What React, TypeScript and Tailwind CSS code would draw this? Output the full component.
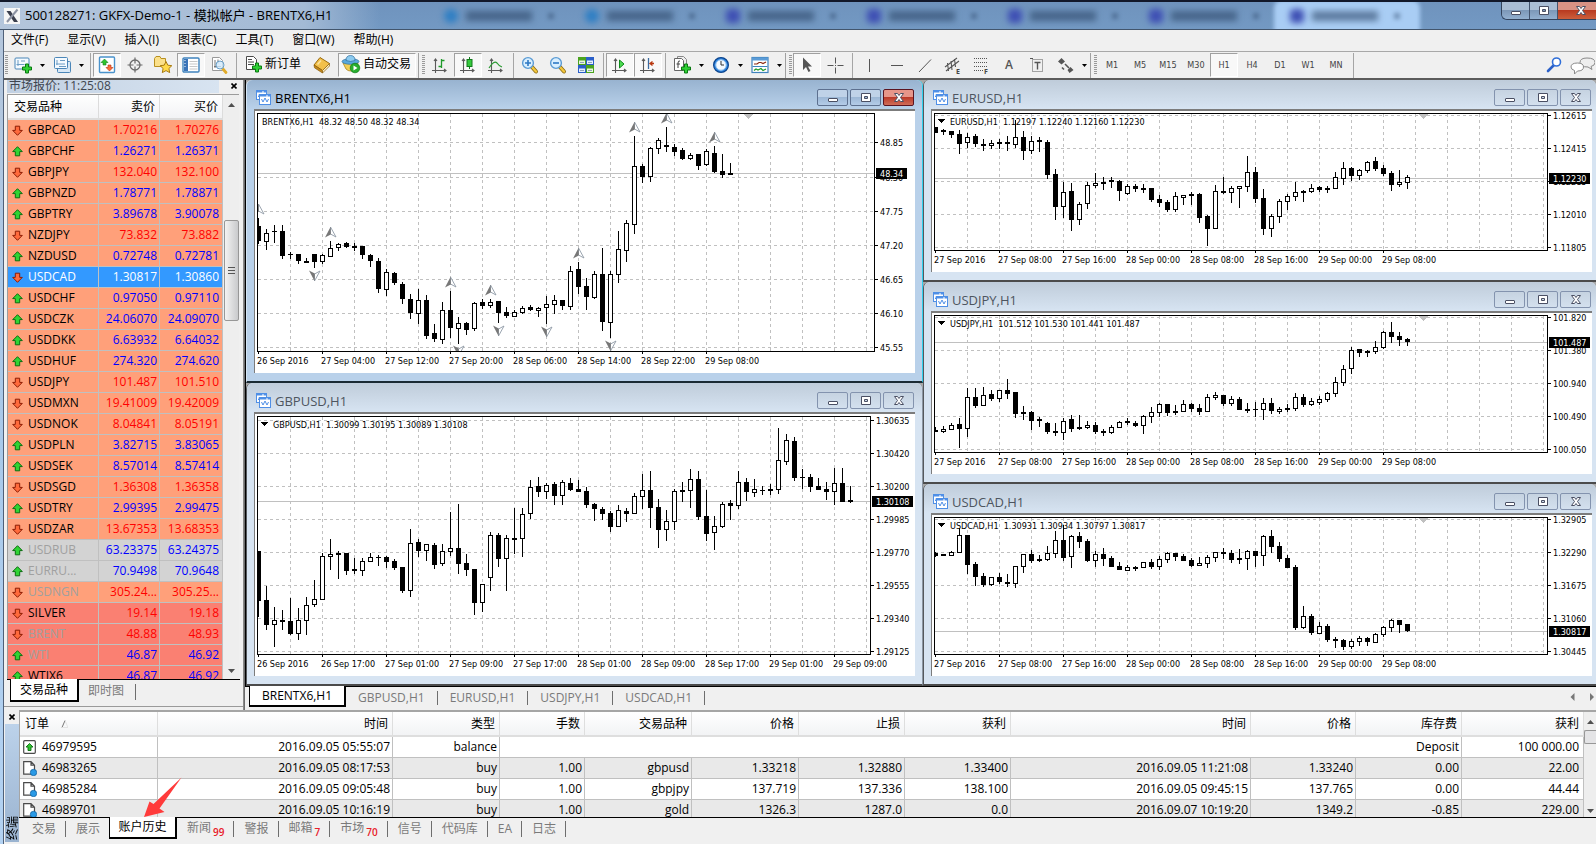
import { ReactNode } from 'react';
import { clsx } from 'clsx';

// high, body top, body bottom, low, filled. Three steps to a pixel.
type Candle = [number, number, number, number, number];

interface ChartData {
  symbol: string;
  quote: string;
  menu: boolean;
  base: number;
  height: number;
  bid: [number, string];
  levels: [number, string][];
  times: string[];
  shift?: number;
  candles: Candle[];
  fractals?: ['up' | 'down', number, number][];
}

const DAYS = ['27 Sep 2016', '27 Sep 08:00', '27 Sep 16:00', '28 Sep 00:00', '28 Sep 08:00', '28 Sep 16:00', '29 Sep 00:00', '29 Sep 08:00'];

const brent: ChartData = {
  symbol: 'BRENTX6,H1',
  quote: '48.32 48.50 48.32 48.34',
  menu: false,
  base: 115,
  height: 239,
  bid: [297, '48.34'],
  levels: [[202, '48.85'], [307, '48.30'], [409, '47.75'], [511, '47.20'], [613, '46.65'], [715, '46.10'], [817, '45.55']],
  times: ['26 Sep 2016', '27 Sep 04:00', '27 Sep 12:00', '27 Sep 20:00', '28 Sep 06:00', '28 Sep 14:00', '28 Sep 22:00', '29 Sep 08:00'],
  shift: 490,
  fractals: [
    ['up', 0, 388], ['down', 7, 590], ['up', 9, 457], ['up', 24, 607], ['down', 25, 815], ['up', 29, 632], ['down', 30, 755],
    ['down', 36, 758], ['up', 40, 521], ['down', 44, 800], ['up', 47, 142], ['up', 51, 116], ['up', 57, 172],
  ],
  candles: [
    [432, 456, 501, 510, 1], [464, 475, 503, 527, 0], [453, 471, 474, 507, 1], [453, 471, 546, 555, 1], [534, 540, 543, 555, 1],
    [540, 540, 561, 570, 1], [552, 561, 567, 567, 1], [538, 538, 564, 582, 1], [540, 543, 564, 570, 0], [501, 522, 548, 548, 0],
    [507, 510, 521, 530, 0], [502, 507, 519, 522, 1], [507, 516, 522, 530, 1], [516, 516, 543, 555, 1], [540, 543, 561, 578, 1],
    [552, 561, 645, 657, 1], [583, 594, 648, 665, 0], [594, 597, 627, 633, 1], [624, 630, 675, 690, 1], [660, 675, 717, 735, 1],
    [645, 678, 719, 750, 0], [663, 678, 786, 795, 1], [750, 777, 795, 804, 1], [684, 706, 797, 809, 0], [651, 708, 762, 792, 1],
    [729, 747, 765, 810, 0], [744, 747, 768, 783, 1], [684, 685, 765, 770, 0], [675, 684, 696, 705, 1], [675, 684, 696, 702, 0],
    [681, 681, 717, 747, 1], [699, 714, 725, 732, 1], [708, 714, 728, 728, 0], [696, 702, 716, 720, 0], [693, 699, 708, 711, 1],
    [699, 702, 711, 728, 0], [666, 690, 702, 750, 0], [663, 678, 692, 720, 0], [678, 678, 696, 708, 1], [576, 591, 698, 708, 0],
    [564, 585, 639, 660, 1], [612, 636, 669, 708, 1], [591, 600, 671, 675, 0], [522, 600, 744, 771, 1], [591, 600, 746, 792, 0],
    [471, 525, 602, 627, 0], [438, 447, 530, 564, 0], [186, 276, 452, 480, 0], [270, 276, 309, 327, 1], [219, 222, 308, 324, 0],
    [192, 198, 224, 240, 0], [159, 213, 219, 234, 1], [210, 219, 234, 246, 1], [222, 228, 255, 258, 1], [237, 243, 254, 258, 0],
    [240, 240, 276, 288, 1], [225, 231, 272, 276, 0], [216, 237, 294, 297, 1], [240, 291, 303, 312, 1], [267, 297, 302, 302, 1],
  ],
};

const gbpusd: ChartData = {
  symbol: 'GBPUSD,H1',
  quote: '1.30099 1.30195 1.30089 1.30108',
  menu: true,
  base: 109,
  height: 239,
  bid: [364, '1.30108'],
  levels: [
    [121, '1.30635'], [220, '1.30420'], [320, '1.30200'], [418, '1.29985'], [517, '1.29770'], [616, '1.29555'], [715, '1.29340'], [814, '1.29125'],
  ],
  times: [
    '26 Sep 2016', '26 Sep 17:00', '27 Sep 01:00', '27 Sep 09:00', '27 Sep 17:00',
    '28 Sep 01:00', '28 Sep 09:00', '28 Sep 17:00', '29 Sep 01:00', '29 Sep 09:00',
  ],
  candles: [
    [516, 516, 666, 714, 1], [621, 663, 738, 753, 1], [684, 723, 738, 804, 0], [693, 723, 729, 753, 1], [657, 726, 765, 768, 1],
    [687, 723, 765, 783, 0], [654, 676, 725, 768, 0], [603, 660, 678, 684, 0], [522, 531, 662, 663, 0], [480, 525, 533, 573, 0],
    [516, 521, 528, 600, 1], [522, 522, 576, 588, 1], [537, 570, 574, 585, 1], [537, 546, 576, 591, 0], [522, 534, 549, 549, 0],
    [528, 534, 537, 561, 1], [531, 534, 549, 567, 1], [540, 546, 567, 573, 1], [564, 564, 636, 642, 1], [450, 492, 635, 654, 0],
    [480, 489, 516, 534, 1], [495, 495, 516, 546, 0], [492, 498, 556, 570, 1], [495, 516, 555, 561, 0], [399, 507, 518, 530, 0],
    [375, 507, 555, 585, 1], [525, 552, 573, 591, 1], [570, 570, 672, 708, 1], [615, 615, 671, 699, 0], [459, 468, 597, 636, 0],
    [462, 468, 540, 564, 1], [468, 477, 540, 636, 0], [387, 477, 483, 525, 1], [387, 405, 480, 534, 0], [303, 324, 405, 420, 0],
    [294, 321, 339, 354, 1], [312, 318, 339, 360, 0], [309, 315, 351, 378, 1], [303, 309, 351, 378, 0], [297, 312, 333, 336, 1],
    [303, 330, 339, 339, 1], [324, 336, 378, 387, 1], [372, 375, 390, 426, 1], [384, 390, 405, 423, 1], [396, 402, 444, 459, 1],
    [378, 393, 444, 444, 0], [387, 396, 405, 429, 1], [342, 351, 405, 405, 0], [285, 333, 354, 390, 0], [276, 333, 387, 447, 1],
    [360, 384, 453, 507, 1], [393, 426, 453, 486, 0], [330, 336, 429, 453, 0], [309, 333, 339, 369, 1], [270, 300, 336, 387, 0],
    [276, 300, 414, 423, 1], [333, 411, 465, 486, 1], [411, 441, 462, 513, 0], [369, 375, 444, 447, 0], [363, 372, 381, 423, 1],
    [276, 309, 381, 390, 0], [297, 309, 339, 366, 1], [300, 330, 342, 354, 0], [321, 332, 336, 348, 1], [315, 330, 336, 348, 1],
    [147, 243, 333, 345, 0], [165, 183, 248, 258, 0], [174, 186, 297, 306, 1], [270, 294, 297, 330, 1], [285, 294, 324, 339, 1],
    [297, 321, 333, 333, 1], [309, 330, 339, 363, 1], [267, 312, 339, 378, 0], [267, 312, 369, 369, 1], [321, 363, 369, 372, 1],
  ],
};

const eurusd: ChartData = {
  symbol: 'EURUSD,H1',
  quote: '1.12197 1.12240 1.12160 1.12230',
  menu: true,
  base: 115,
  height: 138,
  bid: [310, '1.12230'],
  levels: [[121, '1.12615'], [220, '1.12415'], [319, '1.12215'], [418, '1.12010'], [517, '1.11805']],
  times: DAYS,
  shift: 488,
  candles: [
    [159, 159, 177, 177, 1], [165, 168, 174, 183, 1], [171, 171, 183, 192, 1], [168, 180, 210, 240, 1], [177, 189, 207, 222, 0],
    [180, 186, 210, 219, 1], [195, 209, 215, 231, 1], [198, 207, 215, 225, 0], [195, 204, 210, 225, 1], [186, 204, 210, 231, 1],
    [138, 189, 213, 222, 0], [171, 189, 231, 258, 1], [186, 201, 231, 240, 0], [189, 198, 204, 234, 1], [198, 204, 303, 315, 1],
    [285, 300, 399, 438, 1], [324, 354, 399, 432, 0], [327, 351, 438, 471, 1], [384, 390, 438, 453, 0], [324, 333, 389, 405, 0],
    [297, 327, 335, 342, 0], [309, 324, 330, 348, 1], [309, 318, 324, 342, 1], [318, 321, 351, 381, 1], [330, 336, 360, 363, 0],
    [330, 336, 345, 354, 1], [330, 342, 348, 357, 1], [342, 342, 378, 384, 1], [363, 375, 387, 399, 1], [378, 384, 408, 414, 1],
    [354, 366, 408, 414, 0], [363, 363, 371, 393, 0], [354, 360, 366, 393, 1], [357, 360, 432, 447, 1], [423, 426, 465, 516, 1],
    [333, 351, 465, 465, 0], [309, 350, 357, 360, 1], [336, 342, 357, 387, 0], [336, 336, 345, 402, 0], [246, 294, 339, 354, 0],
    [279, 294, 375, 387, 1], [345, 372, 465, 483, 1], [420, 426, 465, 489, 0], [375, 381, 429, 447, 0], [360, 366, 384, 408, 0],
    [324, 354, 369, 381, 0], [348, 350, 357, 384, 1], [330, 342, 354, 357, 0], [336, 339, 348, 354, 1], [336, 342, 348, 357, 1],
    [294, 309, 345, 345, 0], [264, 282, 315, 333, 0], [279, 282, 306, 321, 1], [285, 288, 306, 318, 0], [261, 264, 291, 297, 0],
    [249, 261, 285, 291, 1], [273, 282, 300, 306, 1], [291, 297, 333, 351, 1], [288, 324, 333, 339, 0], [303, 309, 327, 345, 0],
  ],
};

const usdjpy: ChartData = {
  symbol: 'USDJPY,H1',
  quote: '101.512 101.530 101.441 101.487',
  menu: true,
  base: 112,
  height: 138,
  bid: [193, '101.487'],
  levels: [[118, '101.820'], [217, '101.380'], [316, '100.940'], [415, '100.490'], [514, '100.050']],
  times: DAYS,
  shift: 488,
  candles: [
    [450, 457, 463, 465, 1], [447, 454, 463, 468, 0], [438, 444, 458, 459, 0], [423, 441, 456, 513, 1], [333, 360, 455, 480, 0],
    [333, 360, 387, 393, 1], [330, 354, 386, 387, 0], [339, 351, 366, 372, 1], [339, 339, 365, 375, 0], [306, 339, 351, 366, 1],
    [345, 345, 411, 423, 1], [387, 405, 411, 429, 1], [402, 405, 432, 459, 1], [420, 426, 432, 450, 1], [435, 438, 465, 471, 1],
    [438, 460, 467, 477, 1], [423, 430, 467, 489, 0], [414, 426, 456, 465, 1], [414, 450, 456, 459, 1], [432, 444, 453, 456, 0],
    [435, 444, 465, 471, 1], [456, 462, 468, 477, 1], [444, 450, 467, 471, 0], [432, 433, 453, 453, 0], [423, 432, 438, 444, 1],
    [432, 438, 447, 450, 1], [414, 417, 446, 471, 0], [390, 405, 420, 438, 0], [378, 381, 407, 420, 0], [381, 381, 408, 417, 1],
    [384, 402, 408, 414, 1], [369, 381, 404, 405, 0], [378, 381, 396, 405, 1], [381, 393, 405, 414, 1], [351, 360, 405, 405, 0],
    [345, 354, 362, 369, 0], [354, 354, 381, 387, 1], [357, 366, 381, 387, 0], [360, 366, 399, 399, 1], [378, 396, 400, 408, 1],
    [375, 396, 399, 420, 1], [363, 378, 398, 429, 0], [363, 378, 402, 411, 1], [390, 396, 405, 411, 0], [381, 393, 399, 405, 1],
    [348, 360, 396, 402, 0], [351, 360, 384, 390, 1], [363, 372, 383, 387, 0], [357, 366, 377, 384, 0], [345, 348, 368, 375, 0],
    [300, 315, 350, 360, 0], [264, 276, 317, 327, 0], [210, 219, 276, 291, 0], [216, 216, 228, 240, 1], [219, 222, 228, 240, 1],
    [192, 210, 225, 231, 0], [162, 165, 212, 216, 0], [135, 165, 180, 198, 1], [165, 177, 189, 207, 1], [183, 186, 195, 207, 1],
  ],
};

const usdcad: ChartData = {
  symbol: 'USDCAD,H1',
  quote: '1.30931 1.30934 1.30797 1.30817',
  menu: true,
  base: 112,
  height: 138,
  bid: [455, '1.30817'],
  levels: [[118, '1.32905'], [217, '1.32290'], [316, '1.31675'], [415, '1.31060'], [514, '1.30445']],
  times: DAYS,
  shift: 488,
  candles: [
    [219, 222, 231, 234, 1], [225, 225, 230, 231, 1], [216, 219, 231, 231, 0], [147, 168, 221, 221, 0], [168, 168, 258, 285, 1],
    [249, 255, 294, 321, 1], [282, 291, 318, 324, 1], [294, 294, 318, 321, 0], [282, 294, 309, 315, 1], [285, 309, 315, 324, 1],
    [261, 261, 315, 327, 0], [225, 225, 263, 282, 0], [213, 225, 246, 252, 1], [228, 240, 246, 249, 1], [201, 222, 242, 246, 0],
    [156, 183, 224, 237, 0], [138, 183, 237, 246, 1], [168, 171, 233, 267, 0], [159, 171, 189, 207, 1], [180, 186, 246, 249, 1],
    [216, 225, 246, 264, 0], [207, 225, 240, 261, 1], [231, 237, 264, 264, 1], [249, 261, 273, 273, 1], [258, 264, 276, 276, 0],
    [261, 264, 270, 276, 1], [249, 249, 266, 267, 0], [240, 249, 264, 270, 1], [231, 240, 264, 273, 0], [219, 222, 243, 252, 0],
    [222, 222, 234, 246, 1], [225, 231, 246, 246, 1], [237, 243, 261, 264, 1], [234, 252, 260, 261, 0], [228, 234, 254, 267, 0],
    [219, 219, 236, 249, 0], [207, 219, 225, 240, 1], [213, 222, 243, 252, 1], [210, 237, 243, 255, 1], [213, 216, 239, 273, 0],
    [216, 216, 231, 264, 1], [168, 171, 231, 261, 0], [153, 171, 204, 222, 1], [189, 201, 240, 249, 1], [228, 237, 267, 267, 1],
    [258, 264, 447, 453, 1], [381, 411, 446, 450, 0], [405, 411, 462, 468, 1], [429, 441, 464, 465, 0], [435, 441, 483, 489, 1],
    [474, 480, 486, 507, 1], [480, 483, 504, 513, 1], [480, 486, 503, 510, 0], [471, 477, 488, 501, 0], [474, 477, 489, 501, 1],
    [462, 465, 491, 492, 0], [441, 444, 467, 474, 0], [420, 423, 446, 459, 0], [423, 423, 438, 462, 1], [435, 435, 456, 459, 1],
  ],
};

type Tone = 'salmon' | 'red' | 'gray' | 'selected';

const quotes: [string, string, string, 'up' | 'down', Tone, boolean?][] = [
  ['GBPCAD', '1.70216', '1.70276', 'down', 'salmon'],
  ['GBPCHF', '1.26271', '1.26371', 'up', 'salmon'],
  ['GBPJPY', '132.040', '132.100', 'down', 'salmon'],
  ['GBPNZD', '1.78771', '1.78871', 'up', 'salmon'],
  ['GBPTRY', '3.89678', '3.90078', 'up', 'salmon'],
  ['NZDJPY', '73.832', '73.882', 'down', 'salmon'],
  ['NZDUSD', '0.72748', '0.72781', 'up', 'salmon'],
  ['USDCAD', '1.30817', '1.30860', 'down', 'selected'],
  ['USDCHF', '0.97050', '0.97110', 'up', 'salmon'],
  ['USDCZK', '24.06070', '24.09070', 'up', 'salmon'],
  ['USDDKK', '6.63932', '6.64032', 'up', 'salmon'],
  ['USDHUF', '274.320', '274.620', 'up', 'salmon'],
  ['USDJPY', '101.487', '101.510', 'down', 'salmon'],
  ['USDMXN', '19.41009', '19.42009', 'down', 'salmon'],
  ['USDNOK', '8.04841', '8.05191', 'down', 'salmon'],
  ['USDPLN', '3.82715', '3.83065', 'up', 'salmon'],
  ['USDSEK', '8.57014', '8.57414', 'up', 'salmon'],
  ['USDSGD', '1.36308', '1.36358', 'down', 'salmon'],
  ['USDTRY', '2.99395', '2.99475', 'up', 'salmon'],
  ['USDZAR', '13.67353', '13.68353', 'down', 'salmon'],
  ['USDRUB', '63.23375', '63.24375', 'up', 'gray', true],
  ['EURRU...', '70.9498', '70.9648', 'up', 'gray', true],
  ['USDNGN', '305.24...', '305.25...', 'down', 'salmon', true],
  ['SILVER', '19.14', '19.18', 'down', 'red'],
  ['BRENT', '48.88', '48.93', 'down', 'red', true],
  ['WTI', '46.87', '46.92', 'up', 'red', true],
  ['WTIX6', '46.87', '46.92', 'up', 'red'],
];

const orders = [
  ['46983265', '2016.09.05 08:17:53', 'buy', '1.00', 'gbpusd', '1.33218', '1.32880', '1.33400', '2016.09.05 11:21:08', '1.33240', '0.00', '22.00'],
  ['46985284', '2016.09.05 09:05:48', 'buy', '1.00', 'gbpjpy', '137.719', '137.336', '138.100', '2016.09.05 09:45:15', '137.765', '0.00', '44.44'],
  ['46989701', '2016.09.05 10:16:19', 'buy', '1.00', 'gold', '1326.3', '1287.0', '0.0', '2016.09.07 10:19:20', '1349.2', '-0.85', '229.00'],
];

const toneClass: Record<Tone, string> = {
  salmon: 'bg-[#ffa07a]',
  red: 'bg-[#fa8072]',
  gray: 'bg-[#d3d3d3]',
  selected: 'bg-[#3399ff] text-white',
};

function PriceArrow({ dir }: { dir: 'up' | 'down' }) {
  return (
    <svg width="11" height="11" viewBox="0 0 11 11" className={clsx('shrink-0', dir === 'down' && 'rotate-180')}>
      <path
        d="M5.5 0.7 L10.3 5.6 H7.7 V9.8 H3.3 V5.6 H0.7 Z"
        fill={dir === 'up' ? '#2fd433' : '#ff6a3c'}
        stroke={dir === 'up' ? '#0b6d10' : '#8c1c04'}
        strokeWidth="1"
        strokeLinejoin="round"
      />
    </svg>
  );
}

function Fractal({ dir, x, y }: { dir: 'up' | 'down'; x: number; y: number }) {
  const flip = dir === 'down' ? `translate(${x} ${y + 10}) scale(1 -1)` : `translate(${x} ${y})`;
  return (
    <g transform={flip}>
      <path d="M0.5 0 L6 10 L0.5 7 Z" fill="#fff" stroke="#8e9aa6" strokeWidth="0.9" />
      <path d="M0.5 0 L-5 10.5 L0.8 7.5 Z" fill="#777" />
    </g>
  );
}

function Chart({ data }: { data: ChartData }) {
  const y = (v: number) => Math.floor((v - data.base) / 3);
  const inner = data.height - 2;
  const columns = Array.from({ length: 60 }, (_, i) => 32 + i * 32);
  return (
    <div className="h-full bg-white pl-0.5 pt-0.5 font-['DejaVu_Sans_Condensed','Open_Sans',sans-serif] text-[9px]">
      <div className="flex">
        <div className="min-w-0 flex-1 border border-black">
          <svg className="block w-full" height={inner} shapeRendering="crispEdges">
            <g stroke="#c0c0c0" strokeDasharray="3 3">
              {columns.map((x) => (
                <line key={x} x1={x + 0.5} x2={x + 0.5} y1="0" y2={inner} />
              ))}
              {data.levels.map(([v]) => (
                <line key={v} x1="0" x2="100%" y1={y(v) - 0.5} y2={y(v) - 0.5} />
              ))}
            </g>
            <line x1="0" x2="100%" y1={y(data.bid[0]) - 0.5} y2={y(data.bid[0]) - 0.5} stroke="#c0c0c0" />
            {data.shift && <path d={`M${data.shift - 5} 0 h10 l-5 5 Z`} fill="#c0c0c0" />}
            {data.menu && <path d="M2 5 h8 l-4 4 Z" fill="#000" />}
            <text x={data.menu ? 15 : 4} y="11" fill="#000">
              {data.symbol + '\u00a0\u00a0' + data.quote}
            </text>
            {data.candles.map(([high, top, bottom, low, filled], i) => {
              const h = Math.max(1, y(bottom) - y(top));
              return (
                <g key={i}>
                  <rect x={i * 8} y={y(high) - 1} width="1" height={y(low) - y(high)} />
                  <rect x={i * 8 - 2} y={y(top) - 1} width="5" height={h} />
                  {!filled && h > 2 && <rect x={i * 8 - 1} y={y(top)} width="3" height={h - 2} fill="#fff" />}
                </g>
              );
            })}
            <g shapeRendering="auto">
              {data.fractals?.map(([dir, i, v]) => (
                <Fractal key={i} dir={dir} x={i * 8} y={y(v) - 1} />
              ))}
            </g>
          </svg>
        </div>
        <svg width={data.bid[1].length > 5 ? 44 : 40} height={data.height} className="block shrink-0 overflow-visible">
          {data.levels.map(([v, label]) => (
            <g key={v}>
              <rect x="0" y={y(v)} width="3" height="1" />
              <text x="5" y={y(v) + 4}>{label}</text>
            </g>
          ))}
          <rect x="1" y={y(data.bid[0]) - 5} width={data.bid[1].length > 5 ? 41 : 31} height="11" />
          <text x="5" y={y(data.bid[0]) + 4} fill="#fff">{data.bid[1]}</text>
        </svg>
      </div>
      <svg className="block w-full overflow-visible" height="16">
        {data.times.map((label, i) => (
          <g key={label}>
            <rect x={i * 64 + 1} y="0" width="1" height="2" />
            <text x={i * 64} y="12">{label}</text>
          </g>
        ))}
      </svg>
    </div>
  );
}

type Glyph = 'min' | 'max' | 'close';

function CaptionGlyph({ kind }: { kind: Glyph }) {
  return (
    <svg width="14" height="12" viewBox="0 0 14 12" fill="#fff" stroke="#4a4f63" strokeWidth="1">
      {kind === 'min' && <rect x="2.5" y="6.5" width="9" height="3" rx="0.5" />}
      {kind === 'max' && <path d="M2.5 1.5 h9 v8 h-9 Z M5.5 4.5 v2 h3 v-2 Z" fillRule="evenodd" />}
      {kind === 'close' && (
        <path d="M2.5 1.5 h3 l1.5 2 l1.5 -2 h3 l-3 4 l3 4 h-3 l-1.5 -2 l-1.5 2 h-3 l3 -4 Z" strokeLinejoin="round" />
      )}
    </svg>
  );
}

function CaptionButton({ kind, active, label }: { kind: Glyph; active: boolean; label: string }) {
  return (
    <button
      aria-label={label}
      className={clsx(
        'flex h-[17px] w-[31px] items-center justify-center rounded-xs border',
        active && kind === 'close' && 'border-[#5b1420] bg-linear-to-b from-[#e6968a] from-45% via-[#bb3a2a] via-50% to-[#cf6c58]',
        active && kind !== 'close' && 'border-[#5d708f] bg-linear-to-b from-[#bfd2e8] from-45% via-[#9db8d6] via-50% to-[#b4cce8]',
        !active && 'border-[#8393ae] bg-linear-to-b from-[#c6d3e1] to-[#d3e0ee]',
      )}
    >
      <CaptionGlyph kind={kind} />
    </button>
  );
}

function ChartIcon() {
  return (
    <svg width="15" height="15" viewBox="0 0 15 15" fill="none" stroke="#4f8fe6">
      <rect x="0.5" y="0.5" width="10" height="9" fill="#fff" />
      <path d="M0.5 1.5 h10" strokeWidth="2" strokeDasharray="6 1" />
      <path d="M2 6.5 h1 v-2 h1.5 v3" />
      <rect x="3.5" y="4.5" width="11" height="10" fill="#fff" />
      <path d="M3.5 5.5 h11" strokeWidth="2" strokeDasharray="7 1" />
      <path d="M5.5 9 l1.5 3 l2 -4 l2 4 l1.5 -3" />
    </svg>
  );
}

function ChartWindow({ data, active = false, cut = false }: { data: ChartData; active?: boolean; cut?: boolean }) {
  return (
    <section
      className={clsx(
        'flex flex-1 flex-col rounded-t-md border-b-2 border-l pb-2 pl-[7px]',
        cut ? 'pr-1' : 'border-r pr-[7px]',
        active
          ? 'border-b-[#1a2a33] border-l-[#d5e6f5] border-r-[#2fd0ee] bg-[#b9d1ea]'
          : 'border-b-[#4b4b4b] border-l-[#55585c] border-r-[#8b96a3] bg-[#d7e4f2]',
      )}
    >
      <header
        className={clsx(
          '-ml-[7px] flex h-[29px] shrink-0 items-center rounded-t-md pl-[9px] pt-1.5',
          cut ? '-mr-1 pr-[5px]' : '-mr-[7px] pr-2',
          active ? 'bg-linear-to-b from-[#98b3d0] to-[#b9d1ea]' : 'bg-linear-to-b from-[#bfccda] to-[#d7e4f2]',
        )}
      >
        <ChartIcon />
        <h2 className={clsx('ml-1 flex-1 text-[13px] leading-4', active ? 'text-black' : 'text-[#4d5560]')}>{data.symbol}</h2>
        <div className="flex gap-0.5">
          <CaptionButton kind="min" active={active} label="最小化" />
          <CaptionButton kind="max" active={active} label="最大化" />
          <CaptionButton kind="close" active={active} label="关闭" />
        </div>
      </header>
      <div className="min-h-0 flex-1 border-l border-t-2 border-[#7c7c7c]">
        <Chart data={data} />
      </div>
    </section>
  );
}

function ToolButton({ children, pressed = false, label }: { children: ReactNode; pressed?: boolean; label: string }) {
  return (
    <button
      aria-label={label}
      className={clsx(
        'flex h-6 w-7 shrink-0 items-center justify-center border',
        pressed ? 'border-white border-l-[#a0a0a0] border-t-[#a0a0a0] bg-[#f8f8f8]' : 'border-transparent',
      )}
    >
      {children}
    </button>
  );
}

function Icon({ children }: { children: ReactNode }) {
  return (
    <svg width="20" height="20" viewBox="0 0 20 20" fill="none" className="shrink-0">
      {children}
    </svg>
  );
}

function Caret() {
  return (
    <button aria-label="更多" className="flex h-6 w-[11px] shrink-0 items-center justify-center">
      <svg width="5" height="3" viewBox="0 0 5 3"><path d="M0 0 h5 l-2.5 3 Z" /></svg>
    </button>
  );
}

function Sep() {
  return <span className="flex h-[25px] w-1.5 shrink-0 justify-center"><i className="w-px bg-[#a5a5a5]" /></span>;
}

function Grip({ first = false }: { first?: boolean }) {
  return (
    <span className={clsx('flex h-[25px] shrink-0 items-center', first ? 'w-[5px] justify-center' : 'w-2 justify-end border-l border-[#a0a0a0] pr-px')}>
      <svg width="3" height="20" viewBox="0 0 3 20"><path d="M1.5 0 V20" stroke="#9a9a9a" strokeWidth="3" strokeDasharray="1 1" /></svg>
    </span>
  );
}

function Plus() {
  return <path d="M12.5 9 h3 v3 h3 v3 h-3 v3 h-3 v-3 h-3 v-3 h3 Z" fill="#2fd035" stroke="#0a7a12" strokeWidth="1" />;
}

function Lens({ sign }: { sign: 'plus' | 'minus' }) {
  return (
    <Icon>
      <path d="M12 12 L16 16.5" stroke="#8a6a12" strokeWidth="4" strokeLinecap="round" />
      <path d="M12 12 L16 16.5" stroke="#f3c73c" strokeWidth="2.4" strokeLinecap="round" />
      <circle cx="8" cy="8" r="5.4" fill="#d9efff" stroke="#5a9bd4" strokeWidth="1.4" />
      <path d={sign === 'plus' ? 'M5 8 h6 M8 5 v6' : 'M5 8 h6'} stroke="#2d78c4" strokeWidth="1.6" />
    </Icon>
  );
}

function Axes({ children }: { children: ReactNode }) {
  return (
    <Icon>
      <path d="M5.5 4 V18 M2 15.5 H16 M4 6 L5.5 4 L7 6 M14 14 L16 15.5 L14 17" stroke="#5a5a5a" strokeWidth="1.1" />
      {children}
    </Icon>
  );
}

const pageShape = 'M3.5 2.5 h7 l3 3 v10 h-10 Z';

function Toolbar() {
  return (
    <div className="flex h-[29px] shrink-0 items-center overflow-hidden border-b-2 border-t border-b-[#5c5c5c] border-t-[#a8a8a8]">
      <Grip first />
      <ToolButton label="新图表">
        <Icon>
          <rect x="2" y="3" width="14" height="11" rx="1" fill="#f4faff" stroke="#4b86b8" />
          <path d="M5 5 v6 M3.5 9.5 h8 M8 6 h4" stroke="#6c9cc4" />
          <Plus />
        </Icon>
      </ToolButton>
      <Caret />
      <ToolButton label="配置文件">
        <Icon>
          <rect x="5.5" y="6.5" width="13" height="11" rx="1" fill="#d7e8f6" stroke="#4b86b8" />
          <rect x="2.5" y="2.5" width="13" height="11" rx="1" fill="#f4faff" stroke="#4b86b8" />
          <path d="M5 5 v5 M4 9 h9 M7 11.5 h7 M8 5.5 h5" stroke="#6c9cc4" />
        </Icon>
      </ToolButton>
      <Caret />
      <Sep />
      <ToolButton pressed label="市场报价">
        <Icon>
          <rect x="2.5" y="2" width="15" height="15.5" rx="1" fill="#fff" stroke="#4a93cc" strokeWidth="1.4" />
          <path d="M7.5 4 l3.5 3.5 h-2 v2.5 h-3 v-2.5 h-2 Z" fill="#2fc52f" stroke="#14821a" strokeWidth="0.6" />
          <path d="M12.5 16 l3.5 -3.5 h-2 v-2.5 h-3 v2.5 h-2 Z" fill="#ff6b39" stroke="#b43410" strokeWidth="0.6" />
        </Icon>
      </ToolButton>
      <ToolButton label="数据窗口">
        <Icon>
          <circle cx="10" cy="10" r="5" stroke="#6b6b6b" strokeWidth="1.3" />
          <path d="M10 2.5 v6 M10 11.5 v6 M2.5 10 h6 M11.5 10 h6" stroke="#6b6b6b" strokeWidth="1.2" />
        </Icon>
      </ToolButton>
      <ToolButton label="导航">
        <Icon>
          <path d="M1.5 3.5 l1.5 -2 h4 l1 2 h4.5 v8 h-11 Z" fill="#fbe08a" stroke="#b89020" />
          <path d="M13 6.5 l1.8 3.7 l4 0.5 l-2.9 2.8 l0.8 4.1 l-3.7 -2 l-3.7 2 l0.8 -4.1 l-2.9 -2.8 l4 -0.5 Z" fill="#ffd94a" stroke="#a87a10" />
        </Icon>
      </ToolButton>
      <ToolButton pressed label="终端">
        <Icon>
          <rect x="2" y="3" width="16" height="14" rx="1" fill="#fff" stroke="#3f83bd" strokeWidth="1.4" />
          <rect x="3" y="4" width="4" height="12" fill="#3973b8" />
          <path d="M8.5 6.5 h8 M8.5 9 h8 M8.5 11.5 h8 M8.5 14 h8" stroke="#c7c7c7" />
          <path d="M3.5 5.5 h1 M3.5 8.5 h1 M3.5 11.5 h1" stroke="#fff" />
        </Icon>
      </ToolButton>
      <ToolButton label="策略测试">
        <Icon>
          <path d={pageShape} fill="#fff" stroke="#9a9a9a" />
          <path d="M6 5 v8 M5 11.5 h7 M9 4.5 v4" stroke="#777" />
          <path d="M13.5 13.5 L17 17.5" stroke="#e0ab2a" strokeWidth="2.8" strokeLinecap="round" />
          <circle cx="11" cy="10" r="4" fill="#cfe8fb" fillOpacity="0.8" stroke="#6a9fc7" />
        </Icon>
      </ToolButton>
      <Sep />
      <button className="flex h-6 w-[69px] shrink-0 items-center gap-0.5 pb-0.5 pl-1">
        <Icon>
          <path d={pageShape} fill="#fff" stroke="#4a4a4a" />
          <path d="M5 5.5 h4 M5 8 h6 M5 10.5 h6" stroke="#4a4a4a" />
          <Plus />
        </Icon>
        新订单
      </button>
      <ToolButton label="MetaEditor">
        <Icon>
          <path d="M2 10 L8 2.5 L17.5 8.5 L10.5 15.5 Z" fill="#f3c04a" stroke="#9a6a0c" />
          <path d="M2 10 L10.5 15.5 V18 L2.5 12.8 Z" fill="#c58a1a" stroke="#8a5a08" strokeWidth="0.7" />
          <path d="M10.5 15.5 L17.5 8.5 V11 L10.5 18 Z" fill="#fff1c0" stroke="#8a5a08" strokeWidth="0.7" />
          <path d="M5.5 9.5 L9 5.5" stroke="#fbe3a0" strokeWidth="1.5" />
        </Icon>
      </ToolButton>
      <button className="mx-0.5 flex h-6 w-[78px] shrink-0 items-center gap-0.5 border border-white border-l-[#a0a0a0] border-t-[#a0a0a0] bg-[#f8f8f8] pb-0.5 pl-0.5">
        <Icon>
          <path d="M2 9 q7 -4 15 0 l-2 6 q-6 4 -10 0 Z" fill="#f4cf55" stroke="#a9831a" strokeWidth="0.8" />
          <ellipse cx="9.5" cy="7.5" rx="8.5" ry="2.8" fill="#5aa9dd" stroke="#2c6d9c" strokeWidth="0.7" />
          <path d="M5 6.5 q0 -5 4.5 -5 q4.5 0 4.5 5 q-4.5 2 -9 0 Z" fill="#8ccbf0" stroke="#2c6d9c" strokeWidth="0.7" />
          <circle cx="14" cy="14" r="4.8" fill="#28ae2e" stroke="#0f7a17" strokeWidth="0.7" />
          <path d="M12.5 11.5 v5 l4 -2.5 Z" fill="#fff" />
        </Icon>
        自动交易
      </button>
      <Grip />
      <ToolButton label="柱状图">
        <Axes><path d="M11.5 4 v9 M11.5 5.5 h3 M8.5 11.5 h3" stroke="#1f9a2a" strokeWidth="1.3" /></Axes>
      </ToolButton>
      <ToolButton pressed label="蜡烛图">
        <Axes>
          <path d="M11.5 2 v12" stroke="#127a1c" />
          <rect x="9" y="4.5" width="5" height="7" fill="#36c93d" stroke="#127a1c" />
        </Axes>
      </ToolButton>
      <ToolButton label="折线图">
        <Axes><path d="M3 13 q5 -8 8 -5 q2 3 5 4" stroke="#2a9a32" strokeWidth="1.2" /></Axes>
      </ToolButton>
      <Sep />
      <ToolButton label="放大"><Lens sign="plus" /></ToolButton>
      <ToolButton label="缩小"><Lens sign="minus" /></ToolButton>
      <ToolButton label="平铺窗口">
        <Icon>
          <rect x="2.5" y="2.5" width="7" height="7" fill="#e9f7df" stroke="#4aa31f" />
          <rect x="10.5" y="2.5" width="7" height="7" fill="#e3efff" stroke="#2a5fc9" />
          <rect x="2.5" y="10.5" width="7" height="7" fill="#e3efff" stroke="#2a5fc9" />
          <rect x="10.5" y="10.5" width="7" height="7" fill="#e9f7df" stroke="#4aa31f" />
          <path d="M2 4 h8 M10 12 h8" stroke="#4aa31f" strokeWidth="3" />
          <path d="M10 4 h8 M2 12 h8" stroke="#2a5fc9" strokeWidth="3" />
          <path d="M4 7.5 h4 M12 7.5 h4 M4 15.5 h4 M12 15.5 h4" stroke="#8fa4b8" />
        </Icon>
      </ToolButton>
      <Sep />
      <ToolButton pressed label="自动滚动">
        <Axes><path d="M9.5 5 l4.5 4 l-4.5 4 Z" fill="#4ddb50" stroke="#0f8a1b" /></Axes>
      </ToolButton>
      <ToolButton pressed label="图表平移">
        <Axes>
          <path d="M10.5 3 v11" stroke="#3a6aa0" strokeWidth="1.3" />
          <path d="M16 8.5 h-4 M14.5 6.5 l-2.5 2 l2.5 2" stroke="#b8360e" strokeWidth="1.3" />
        </Axes>
      </ToolButton>
      <Sep />
      <ToolButton label="指标列表">
        <Icon>
          <path d="M5.5 1.5 h6 l3 3 v9 h-9 Z" fill="#eee" stroke="#888" />
          <path d="M2.5 3.5 h7 l2 2 v10 h-9 Z" fill="#fff" stroke="#666" />
          <path d="M8 6 q-2 -0.5 -2 2 v5 M4.5 9 h3.5" stroke="#444" />
          <Plus />
        </Icon>
      </ToolButton>
      <Caret />
      <ToolButton label="时间周期">
        <Icon>
          <circle cx="10" cy="10" r="7.4" fill="#2f86e0" stroke="#0b438c" strokeWidth="1.2" />
          <circle cx="10" cy="10" r="5.2" fill="#f4faff" stroke="#9cc6ef" />
          <path d="M10 6 v4 h3" stroke="#333" />
        </Icon>
      </ToolButton>
      <Caret />
      <ToolButton label="模板">
        <Icon>
          <rect x="2" y="2.5" width="16" height="15" fill="#fff" stroke="#3f83bd" strokeWidth="1.2" />
          <path d="M2 4 h16" stroke="#5a9bd6" strokeWidth="3" />
          <path d="M2.5 11.5 h15" stroke="#3f83bd" />
          <path d="M4 9 h3 l2 -1.5 h2 l2 1 l3 -1.5" stroke="#8c2b12" strokeWidth="1.2" />
          <path d="M4 15.5 l2 -1.5 l2 1 l3 -1.5 l2 2 l3 -1.5" stroke="#1d9a2a" strokeWidth="1.2" />
        </Icon>
      </ToolButton>
      <Caret />
      <Grip />
      <ToolButton pressed label="光标">
        <Icon><path d="M6 2.5 v12.500 l3 -3 l2.500 5 l2 -1 l-2.500 -4.500 h4 Z" fill="#555" /></Icon>
      </ToolButton>
      <ToolButton label="十字线">
        <Icon><path d="M10.5 2.5 v6 M10.5 12.5 v6 M2.5 10.5 h6 M12.5 10.5 h6 M10 10.5 h1" stroke="#555" /></Icon>
      </ToolButton>
      <Sep />
      <ToolButton label="垂直线"><Icon><path d="M10.5 4 v13" stroke="#555" /></Icon></ToolButton>
      <ToolButton label="水平线"><Icon><path d="M4 10.5 h12" stroke="#555" /></Icon></ToolButton>
      <ToolButton label="趋势线"><Icon><path d="M4 17 L16 4.5" stroke="#555" /></Icon></ToolButton>
      <ToolButton label="等距通道">
        <Icon>
          <path d="M2 12 L14 3 M3 16 L16 6 M4.5 8 l1 8 M8 6 l1 9 M11.5 4 l1 8" stroke="#555" strokeWidth="1.1" />
          <text x="13" y="19" fill="#444" fontSize="7" fontWeight="bold">E</text>
        </Icon>
      </ToolButton>
      <ToolButton label="斐波那契">
        <Icon>
          <path d="M3 3.5 h14 M3 7.5 h14 M3 11.5 h14 M3 15.5 h9" stroke="#555" strokeDasharray="1 1" />
          <text x="13" y="19" fill="#444" fontSize="7" fontWeight="bold">F</text>
        </Icon>
      </ToolButton>
      <ToolButton label="文字"><span className="text-[12px] font-semibold text-[#555]">A</span></ToolButton>
      <ToolButton label="文本标签">
        <Icon>
          <rect x="5.5" y="4.5" width="10" height="12" stroke="#555" strokeDasharray="1 1" />
          <path d="M3 3.5 h3" stroke="#555" />
          <path d="M7.5 7.5 h6 M10.5 7.5 v7" stroke="#555" strokeWidth="1.4" />
        </Icon>
      </ToolButton>
      <ToolButton label="箭头">
        <Icon>
          <path d="M6.5 3 l3.5 3.5 l-3.5 3 l-3.5 -3 Z M15.5 12 l3 3 l-4 3 l-2 -3 Z" fill="#555" />
          <path d="M7 12.5 l2 2 M10 9 l4 4" stroke="#555" strokeWidth="1.6" />
        </Icon>
      </ToolButton>
      <Caret />
      <Grip />
      {['M1', 'M5', 'M15', 'M30', 'H1', 'H4', 'D1', 'W1', 'MN'].map((tf) => (
        <ToolButton key={tf} pressed={tf === 'H1'} label={tf}>
          <span className="font-['DejaVu_Sans_Condensed','Open_Sans',sans-serif] text-[9px] text-[#444]">{tf}</span>
        </ToolButton>
      ))}
      <Sep />
      <span className="flex-1" />
      <ToolButton label="搜索">
        <Icon>
          <path d="M4 16 L10 10" stroke="#2b60c8" strokeWidth="2.6" strokeLinecap="round" />
          <circle cx="12.5" cy="7" r="4" fill="#fff" stroke="#2f6ed8" strokeWidth="1.6" />
        </Icon>
      </ToolButton>
      <ToolButton label="聊天">
        <svg width="26" height="20" viewBox="0 0 26 20" className="shrink-0" fill="#eee" stroke="#8a8a8a">
          <path d="M18 3 q8 0 8 4.5 q0 3 -4 4 l1 3 l-4 -2.5 q-8 0 -8 -4.5 q0 -4.5 7 -4.5 Z" />
          <path d="M8.5 8 q6 0 6 4 q0 4 -6 4 l-3 3 v-3.5 q-3.5 -1 -3.5 -3.5 q0 -4 6.5 -4 Z" fill="#fff" />
        </svg>
      </ToolButton>
    </div>
  );
}

// Browser tabs showing through the glass caption.
function GlassBackdrop() {
  return (
    <div className="absolute inset-0 flex items-center overflow-hidden pl-[440px]">
      {['sky', 'sky', 'indigo', 'indigo', 'indigo', 'indigo', 'indigo'].map((tone, i) => (
        <div
          key={i}
          className={clsx(
            'relative flex w-[141px] shrink-0 items-center gap-2 pl-1',
            i === 6 && "before:absolute before:-left-3 before:-top-[9px] before:h-10 before:w-[146px] before:rounded-lg before:bg-[#a9cdf4] before:blur-[2px] before:content-['']",
          )}
        >
          <i className={clsx('relative size-3.5 blur-[3px]', tone === 'sky' ? 'rounded-full bg-[#2f7fc4]' : 'rounded-sm bg-[#3f50b4]')} />
          <i className="relative h-2.5 w-[66px] bg-[#2c4668]/60 blur-[3px]" />
          <i className="relative ml-2 size-1.5 bg-[#2c4668]/45 blur-[2px]" />
        </div>
      ))}
    </div>
  );
}

function TitleBar() {
  return (
    <div className="relative flex h-[30px] shrink-0 items-center border-b border-t-2 border-b-[#42556c] border-t-[#12182a] bg-linear-to-b from-[#6f93bd] to-[#7399c3]">
      <GlassBackdrop />
      <div className="absolute inset-y-0 left-0 w-[380px] bg-linear-to-r from-[#b4c6dc] via-[#a3bad5] via-80% to-transparent" />
      <svg width="16" height="16" viewBox="0 0 16 16" className="relative ml-1">
        <rect width="16" height="16" fill="#f6f6f6" />
        <path d="M2.5 3 h4 l7.500 11 h-4 Z" fill="#3b3f4d" />
        <path d="M13.5 1.5 L3 14" stroke="#8d93a3" strokeWidth="2" />
      </svg>
      <h1 className="relative ml-[5px] flex-1 pb-0.5 text-[13px]">500128271: GKFX-Demo-1 - 模拟帐户 - BRENTX6,H1</h1>
      <div className="relative flex self-start overflow-hidden rounded-bl-md border-b border-l border-[#33435c]">
        {(['min', 'max', 'close'] as Glyph[]).map((kind) => (
          <button
            key={kind}
            aria-label={kind === 'min' ? '最小化' : kind === 'max' ? '最大化' : '关闭'}
            className={clsx(
              'flex h-[17px] items-center justify-center',
              kind === 'close'
                ? 'w-[38px] bg-linear-to-b from-[#d99284] from-45% via-[#b93a20] via-50% to-[#cc5f3c] pl-2'
                : 'w-7 border-r border-[#43536d] bg-linear-to-b from-[#a9bdd4] from-45% via-[#7d98b8] via-50% to-[#93b0d0]',
            )}
          >
            <CaptionGlyph kind={kind} />
          </button>
        ))}
      </div>
    </div>
  );
}

function CloseX() {
  return (
    <button aria-label="关闭" className="flex size-3 items-center justify-center">
      <svg width="6" height="6" viewBox="0 0 6 6"><path d="M0.5 0.5 L5.5 5.5 M5.5 0.5 L0.5 5.5" stroke="#000" strokeWidth="1.6" /></svg>
    </button>
  );
}

function ScrollArrow({ up = false }: { up?: boolean }) {
  return (
    <svg width="7" height="4" viewBox="0 0 7 4" className={clsx(up && 'rotate-180')}>
      <path d="M0 0 h7 l-3.5 4 Z" fill="#505050" />
    </svg>
  );
}

function MarketWatch() {
  return (
    <aside className="flex w-[240px] shrink-0 flex-col border-r border-[#8a8a8a] pl-[3px]">
      <div className="flex h-[14px] items-start">
        <h2 className="h-[13px] w-[212px] bg-linear-to-r from-[#c1d0e2] to-[#d8e4f1] pl-0.5 leading-[11px] text-[#3f4650]">市场报价: 11:25:08</h2>
        <span className="ml-auto mr-[3px]"><CloseX /></span>
      </div>
      <div className="mr-1 flex min-h-0 flex-1 border-l border-t border-[#9c9c9c]">
        <div className="min-w-0 flex-1 overflow-hidden">
          <table className="w-full table-fixed border-separate border-spacing-0">
            <colgroup>
              <col className="w-[91px]" />
              <col className="w-[61px]" />
              <col />
            </colgroup>
            <thead>
              <tr className="h-[25px] bg-linear-to-b from-white to-[#f1f2f4]">
                <th className="border-b-2 border-r border-[#dcdcdc] pl-1.5 text-left font-normal">交易品种</th>
                <th className="border-b-2 border-r border-[#dcdcdc] pr-1 text-right font-normal">卖价</th>
                <th className="border-b-2 border-r border-[#dcdcdc] pr-1 text-right font-normal">买价</th>
              </tr>
            </thead>
            <tbody>
              {quotes.map(([symbol, bid, ask, dir, tone, dim]) => {
                const price = clsx(
                  'border-b border-r border-[#c0c0c0] text-right',
                  tone !== 'selected' && (dir === 'up' ? 'text-[#0000ff]' : 'text-[#ff0000]'),
                );
                return (
                  <tr key={symbol} className={clsx('h-[21px]', toneClass[tone])}>
                    <td className={clsx('border-b border-r border-[#c0c0c0]', dim && 'text-[#a0a0a0]')}>
                      <span className="flex items-center gap-[5px] pl-1">
                        <PriceArrow dir={dir} />
                        {symbol}
                      </span>
                    </td>
                    <td className={clsx(price, 'pr-0.5')}>{bid}</td>
                    <td className={clsx(price, 'pr-[3px]')}>{ask}</td>
                  </tr>
                );
              })}
            </tbody>
          </table>
        </div>
        <div className="flex w-4 flex-col items-center bg-[#eeeeee] pt-2 pb-1.5">
          <ScrollArrow up />
          <span className="mt-[113px] flex h-[101px] w-[15px] flex-col items-center justify-center gap-0.5 rounded-xs border border-[#979797] bg-linear-to-r from-[#f3f3f3] to-[#c9cacc]">
            <i className="h-px w-[7px] bg-[#555]" />
            <i className="h-px w-[7px] bg-[#555]" />
            <i className="h-px w-[7px] bg-[#555]" />
          </span>
          <span className="mt-auto"><ScrollArrow /></span>
        </div>
      </div>
      <div className="flex h-[27px] shrink-0 items-start">
        <div className="mr-[3px] flex h-6 w-full items-start border-t border-black pl-[3px]">
          <button className="-mt-px h-[23px] w-[69px] border border-b-2 border-r-2 border-t-0 border-black bg-white">交易品种</button>
          <button className="h-[21px] pl-[9px] pr-[11px] text-[#7a7a7a]">即时图</button>
          <i className="mt-1 h-4 w-px bg-[#6e6e6e]" />
        </div>
      </div>
      <div className="-ml-[3px] h-1 shrink-0 border-t border-[#9a9a9a]" />
    </aside>
  );
}

function Workspace() {
  return (
    <main className="flex min-w-0 flex-1 flex-col border-l border-[#6d6d6d]">
      <div className="grid min-h-0 flex-1 grid-cols-[677fr_673fr] border-l border-black bg-[#a8a8a8]">
        <div className="flex min-w-0 flex-col">
          <ChartWindow data={brent} active />
          <ChartWindow data={gbpusd} />
        </div>
        <div className="flex min-w-0 flex-col">
          <ChartWindow data={eurusd} cut />
          <ChartWindow data={usdjpy} cut />
          <ChartWindow data={usdcad} cut />
        </div>
      </div>
      <nav className="flex h-6 shrink-0 items-start border-t border-black pl-1">
        <button className="-mt-px h-[21px] border border-b-2 border-r-2 border-t-0 border-black bg-white px-3 leading-5">BRENTX6,H1</button>
        {['GBPUSD,H1', 'EURUSD,H1', 'USDJPY,H1', 'USDCAD,H1'].map((tab) => (
          <span key={tab} className="flex h-[21px] items-center">
            <button className="px-3 text-[#7a7a7a]">{tab}</button>
            <i className="h-3.5 w-px bg-[#6e6e6e]" />
          </span>
        ))}
        <svg width="26" height="8" viewBox="0 0 26 8" className="ml-auto mt-1.5" fill="#777">
          <path d="M4.5 0 v8 l-4 -4 Z M20 0 v8 l4 -4 Z" />
        </svg>
      </nav>
    </main>
  );
}

function OrderIcon({ balance = false }: { balance?: boolean }) {
  return balance ? (
    <svg width="14" height="16" viewBox="0 0 14 16" className="shrink-0">
      <rect x="0.7" y="1.7" width="11.6" height="12.6" rx="1" fill="#fff" stroke="#4a4a4a" strokeWidth="1.2" />
      <path d="M6.5 4.5 l3.5 3.5 h-2 v3.5 h-3 v-3.5 h-2 Z" fill="#2fc52f" stroke="#0b6d10" strokeWidth="0.9" />
    </svg>
  ) : (
    <svg width="14" height="16" viewBox="0 0 14 16" className="shrink-0">
      <path d="M0.7 1.7 h7.3 l3.5 3.5 v9 h-10.8 Z M8 1.7 v3.5 h3.5" fill="#fff" stroke="#4a4a4a" strokeWidth="1.2" />
      <circle cx="10.5" cy="12.5" r="3.2" fill="#2a9ae6" stroke="#0f5c98" strokeWidth="0.7" />
    </svg>
  );
}

const head = 'border-r border-[#dedede] pr-1 text-right font-normal';
const cell = 'border-b border-r border-[#c0c0c0] pr-0.5 text-right';

function Terminal() {
  return (
    <section className="relative flex h-[134px] shrink-0 pl-px">
      <div className="flex w-[14px] shrink-0 flex-col items-center pb-0.5">
        <span className="flex h-[14px] items-center"><CloseX /></span>
        <div className="flex w-full flex-1 items-end justify-center bg-linear-to-b from-[#bcd2ea] to-[#9ab3d0] pb-0.5">
          <span className="rotate-180 leading-[13px] [text-orientation:sideways] [writing-mode:vertical-rl]">终端</span>
        </div>
      </div>
      <div className="flex min-w-0 flex-1 flex-col">
        <div className="flex h-[107px] shrink-0 border-l border-t-2 border-[#a5a5a5] bg-white">
          <div className="min-w-0 flex-1 overflow-hidden">
            <table className="w-full table-fixed border-separate border-spacing-0">
              <colgroup>
                <col className="w-[138px]" />
                <col className="w-[235px]" />
                <col className="w-[107px]" />
                <col className="w-[85px]" />
                <col className="w-[107px]" />
                <col className="w-[107px]" />
                <col className="w-[106px]" />
                <col className="w-[106px]" />
                <col className="w-[240px]" />
                <col className="w-[105px]" />
                <col className="w-[106px]" />
                <col />
              </colgroup>
              <thead>
                <tr className="h-[25px] bg-linear-to-b from-white to-[#f1f2f4]">
                  <th className="border-b-2 border-r border-[#dedede] pl-[5px] text-left font-normal">
                    <span className="flex items-center gap-3">
                      订单
                      <svg width="7" height="8" viewBox="0 0 7 8" fill="none"><path d="M1 7.5 L4 0.5" stroke="#777" /><path d="M4 0.5 L7 7.5 H1" stroke="#e3e3e3" /></svg>
                    </span>
                  </th>
                  {['时间', '类型', '手数', '交易品种', '价格', '止损', '获利', '时间', '价格', '库存费', '获利'].map((h, i) => (
                    <th key={i} className={clsx(head, 'border-b-2')}>{h}</th>
                  ))}
                </tr>
              </thead>
              <tbody>
                <tr className="h-[21px]">
                  <td className="border-b border-r border-[#c0c0c0] pl-[3px]"><span className="flex items-center gap-[5px]"><OrderIcon balance />46979595</span></td>
                  <td className={cell}>2016.09.05 05:55:07</td>
                  <td className={cell}>balance</td>
                  <td className={cell} colSpan={8}>Deposit</td>
                  <td className={clsx(cell, 'pr-1')}>100 000.00</td>
                </tr>
                {orders.map(([id, ...rest], r) => (
                  <tr key={id} className={clsx('h-[21px]', r % 2 === 0 && 'bg-[#e9e9e9]')}>
                    <td className="border-b border-r border-[#c0c0c0] pl-[3px]"><span className="flex items-center gap-[5px]"><OrderIcon />{id}</span></td>
                    {rest.map((value, i) => (
                      <td key={i} className={clsx(cell, i === 10 && 'pr-1')}>{value}</td>
                    ))}
                  </tr>
                ))}
              </tbody>
            </table>
          </div>
          <div className="flex w-3 flex-col items-center overflow-hidden bg-[#eeeeee] pt-2 pb-1">
            <ScrollArrow up />
            <span className="mt-1.5 h-3.5 w-full rounded-l-xs border border-r-0 border-[#979797] bg-[#e4e4e6]" />
            <span className="mt-auto"><ScrollArrow /></span>
          </div>
        </div>
        <nav className="flex items-start border-t border-black pl-[3px]">
          {[
            ['交易'], ['展示'], ['账户历史'], ['新闻', '99'], ['警报'], ['邮箱', '7'], ['市场', '70'], ['信号'], ['代码库'], ['EA'], ['日志'],
          ].map(([tab, count]) =>
            tab === '账户历史' ? (
              <button key={tab} className="-mt-px h-[22px] w-[68px] border border-b-2 border-r-2 border-t-0 border-black bg-white">{tab}</button>
            ) : (
              <span key={tab} className="flex h-[22px] items-center">
                <button className="flex items-start pl-2.5 pr-[9px] leading-4 text-[#7a7a7a]">
                  {tab}
                  {count && <span className="ml-0.5 mt-1.5 text-[10px] font-semibold leading-3 text-[#e8202a]">{count}</span>}
                </button>
                {tab !== '展示' && <i className="h-4 w-px bg-[#6e6e6e]" />}
              </span>
            ),
          )}
        </nav>
      </div>
      <svg width="44" height="42" viewBox="0 0 44 42" className="pointer-events-none absolute left-[135px] top-[67px]">
        <path d="M5 40 L10.5 24.5 L14.5 27 L42.5 0.5 L20.5 31.5 L25.5 35 Z" fill="#ff3b3b" />
      </svg>
    </section>
  );
}

export default function App() {
  return (
    <div className="flex h-screen flex-col overflow-hidden bg-[#f0f0f0] font-['Open_Sans','Noto_Sans_CJK_SC',sans-serif] text-[12px] leading-4 text-black">
      <TitleBar />
      <div className="flex min-h-0 flex-1">
        <div className="w-1 shrink-0 border-r border-[#4f6078] bg-linear-to-b from-[#b4c6dc] via-[#a9c9ea] to-[#b3d2f2]" />
        <div className="flex min-w-0 flex-1 flex-col">
          <nav className="flex h-[21px] shrink-0 items-center gap-[19px] pb-0.5 pl-[7px]">
            {['文件(F)', '显示(V)', '插入(I)', '图表(C)', '工具(T)', '窗口(W)', '帮助(H)'].map((item) => (
              <button key={item}>{item}</button>
            ))}
          </nav>
          <Toolbar />
          <div className="flex min-h-0 flex-1">
            <MarketWatch />
            <Workspace />
          </div>
          <Terminal />
        </div>
      </div>
    </div>
  );
}
